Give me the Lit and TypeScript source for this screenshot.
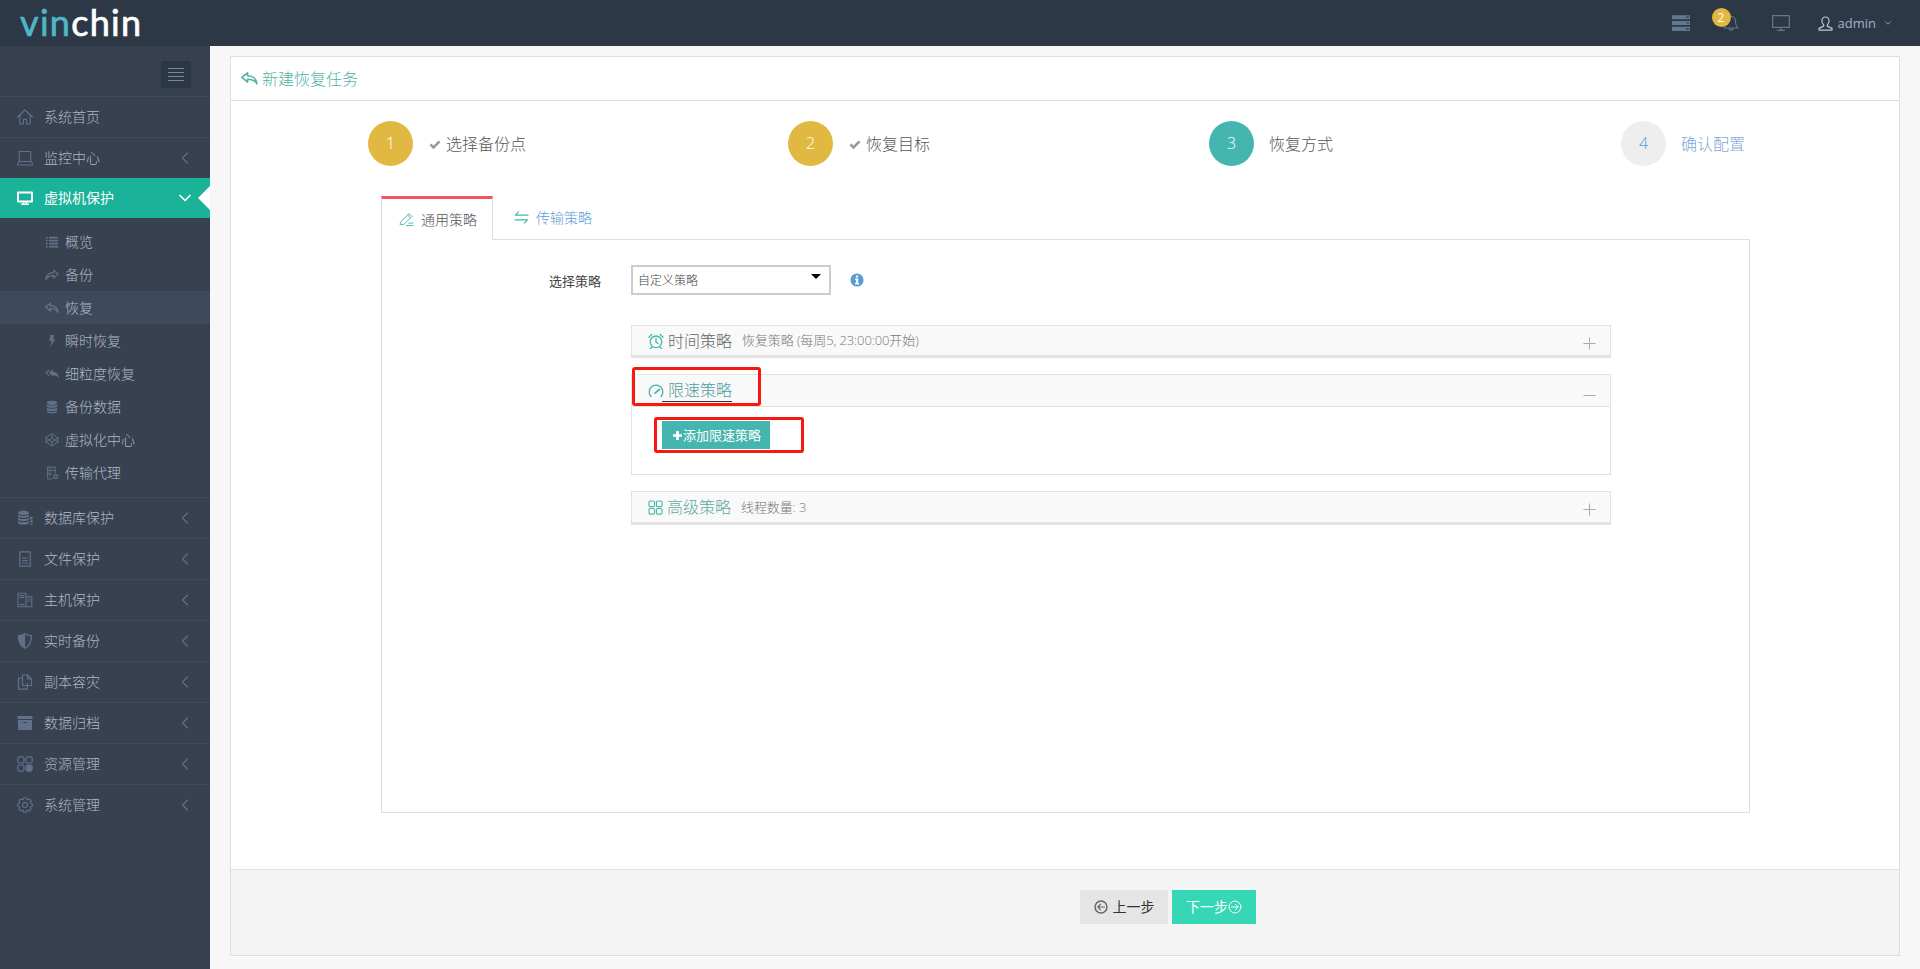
import { LitElement, html, css, svg } from "lit";
import { customElement } from "lit/decorators.js";

const S = (w: number, body: unknown, vb = "0 0 16 16") =>
  html`<svg class="ic" width=${w} height=${w} viewBox=${vb} fill="none" stroke="currentColor" stroke-width="1" stroke-linecap="round" stroke-linejoin="round">${body}</svg>`;

function gear(cx: number, cy: number, ro: number, ri: number, n: number) {
  let d = "";
  const step = (Math.PI * 2) / n;
  for (let i = 0; i < n; i++) {
    const a = i * step;
    const pts = [
      [ri, a - step * 0.5],
      [ro, a - step * 0.22],
      [ro, a + step * 0.22],
    ];
    for (const [r, t] of pts) {
      d += `${d ? "L" : "M"}${(cx + r * Math.cos(t)).toFixed(2)} ${(cy + r * Math.sin(t)).toFixed(2)} `;
    }
  }
  return d + "Z";
}

const I: Record<string, unknown> = {
  home: svg`<path d="M.5 8 8 1 15.500 8M2.800 6.300V15h3.600v-4.600h3.200V15h3.600V6.300" stroke-width="1.100"/>`,
  laptop: svg`<path d="M2.300 1.500h11.400v10H2.300zM2.300 11.500.4 14v1h15.200v-1l-1.900-2.500" stroke-width="1.100"/>`,
  desktop: svg`<path d="M1 2.400h14v9H1z" stroke-width="2"/><path d="M6.600 11.400v2.400M9.400 11.400v2.400M4.600 14.300h6.800" stroke-width="1.500"/>`,
  list: svg`<path d="M1 3h2M4.500 3H15M1 6.400h2M4.500 6.400H15M1 9.800h2M4.500 9.800H15M1 13.200h2M4.500 13.200H15" stroke-width="2" stroke-linecap="butt"/>`,
  share: svg`<path d="M9.800 2.600 15.200 7l-5.400 4.400V8.700C6.400 8.700 3 9.600 1 13c.2-4.400 3.600-7.400 8.800-7.600z" stroke-width="1.400"/>`,
  reply: svg`<path d="M6.200 2.600.8 7l5.400 4.400V8.700c3.400 0 6.800.9 8.800 4.300-.2-4.400-3.600-7.400-8.800-7.600z" stroke-width="1.500"/>`,
  bolt: svg`<path fill="currentColor" stroke="none" d="M6.400 1h4.200L8.800 5.400h2.800L6 15l1.600-7.200H4.800z"/>`,
  replyall: svg`<path fill="currentColor" stroke="none" d="M5 2.500v1.700L2.300 6.600 5 9v1.700L.4 6.600zM9 2.500v2.900c4 .1 6.500 3 6.600 7.600-1.300-2.400-3.300-3.600-6.600-3.600v1.300L4.400 6.600z"/>`,
  db: svg`<g fill="currentColor" stroke="none"><ellipse cx="8" cy="3.200" rx="6" ry="2.400"/><path d="M2 5c1 1.700 11 1.700 12 0v2.400c-1 2-11 2-12 0zM2 8.700c1 1.800 11 1.800 12 0v2.400c-1 2-11 2-12 0zM2 12.400c1 1.700 11 1.700 12 0v.6c-.3 2.800-11.700 2.800-12 0z"/></g>`,
  codepen: svg`<path d="M8 1.200 15 5.600v4.800L8 14.800 1 10.400V5.600zM8 1.200v4.400M8 10.400v4.400M1 5.600 8 10.400l7-4.800M1 10.400 8 5.600l7 4.800" stroke-width="1.100"/>`,
  agent: svg`<path d="M3 1.200h8.500v6.800M3 1.200v13.600h5.500M3 5h8.500M3 9h5M5 3.100h.8M5 7h.8M5 11h.8" stroke-width="1.100"/><circle cx="12.300" cy="12" r="2.200" stroke-width="1.500" stroke-dasharray="1.200 .6"/>`,
  coins: svg`<g fill="currentColor" stroke="none"><ellipse cx="6.500" cy="2.800" rx="5.500" ry="2.300"/><path d="M1 4.600c1 1.700 10 1.700 11 0v2c-1 1.900-10 1.900-11 0zM1 7.800c1 1.700 10 1.700 11 0v2c-1 1.900-10 1.900-11 0zM1 11c1 1.700 10 1.700 11 0v1.800c-.5 2.700-10.500 2.700-11 0z"/><path d="M13 7.300l2.700-.8v2c-.5.700-1.500 1-2.700 1.200zM13 10.700c1.200-.2 2.200-.5 2.700-1.100v2c-.5.700-1.500 1-2.700 1.200zM13 13.900c1.200-.2 2.200-.5 2.700-1.100v1c-.4.800-1.500 1.200-2.700 1.300z"/></g>`,
  file: svg`<path d="M2.800.8h10.400v14.400H2.800zM5.500 7h5M5.500 9.500h5M5.500 12h5" stroke-width="1.200"/>`,
  host: svg`<path d="M1 1.200h8v13.600H1zM9 4.800h5.800v10H9zM3 3.600h4M3 5.600h4M3 12.600h4M11 7h2M11 9h2" stroke-width="1.100"/>`,
  shield: svg`<path d="M8 .8c2 1.200 4.500 1.800 6.500 1.800 0 6-1.500 10.400-6.500 12.600C3 13 1.500 8.600 1.500 2.600 3.500 2.600 6 2 8 .8z" stroke-width="1.300"/><path fill="currentColor" stroke="none" d="M8 .8c-2 1.200-4.500 1.800-6.500 1.800C1.500 8.600 3 13 8 15.200z"/>`,
  copy: svg`<path d="M5.500 4H1.500v11.200h8.800V9M5.500 1h5L14.500 5v6.500h-9zM10.500 1v4h4" stroke-width="1.200"/>`,
  archive: svg`<path fill="currentColor" stroke="none" d="M.5 1h15v3H.5zM1 5h14v10H1z"/><path stroke="#374150" stroke-width="1" d="M6.500 7.500h3"/>`,
  res: svg`<rect x=".8" y=".8" width="6.200" height="6.200" rx="1.600" stroke-width="1.200"/><rect x="9" y=".8" width="6.200" height="6.200" rx="1.600" stroke-width="1.200"/><rect x=".8" y="9" width="6.200" height="6.200" rx="1.600" stroke-width="1.200"/><rect x="9" y="9" width="6.200" height="6.200" rx="1.600" fill="currentColor"/>`,
  gear: svg`<path d=${gear(8, 8, 7.4, 5.6, 8)} stroke-width="1.100"/><circle cx="8" cy="8" r="2.500" stroke-width="1.100"/>`,
  server: svg`<g fill="currentColor" stroke="none"><path fill-rule="evenodd" d="M0 1h16v3.600H0zM12.500 2.300v1H15v-1zM0 6.200h16v3.600H0zM12.500 7.500v1H15v-1zM0 11.400h16V15H0zM12.500 12.700v1H15v-1z"/></g>`,
  bell: svg`<path d="M8 1.200c-2.800 0-4.500 2-4.500 4.800 0 3.500-.8 5.600-2.500 7h14c-1.700-1.400-2.500-3.500-2.500-7 0-2.800-1.700-4.800-4.500-4.800zM6 13c0 2.700 4 2.700 4 0" stroke-width="1.100"/>`,
  monitor: svg`<path d="M.6 1.500h14.800v10.400H.6zM8 11.900v2.400M4.800 14.500h6.400" stroke-width="1.100"/>`,
  user: svg`<path d="M8 1c-2.400 0-3.800 1.800-3.800 4.300 0 2 .9 3.400 1.900 4.300v1.200L1 13.200V15h14v-1.800l-5.100-2.400V9.600c1-.9 1.900-2.300 1.900-4.300C11.800 2.800 10.400 1 8 1z" stroke-width="1.200"/>`,
  down: svg`<path d="M3 5.500 8 10.500l5-5" stroke-width="1.700"/>`,
  left: svg`<path d="M10.500 3 5.500 8l5 5" stroke-width="1.100"/>`,
  check: svg`<path d="M2 8.500 6 12.500 14 4.500" stroke-width="3.500" stroke-linecap="butt" stroke-linejoin="miter"/>`,
  pencil: svg`<path d="M2 10.500 10.800 1.700 13.800 4.700 5 13.500H1.500zM9.300 3.200l3 3M8 14.500h7M10.500 11.800h4.500"/>`,
  swap: svg`<path d="M5 2 1.500 5.500H15M11 14l3.500-3.500H1" stroke-width="1.200"/>`,
  alarm: svg`<circle cx="8" cy="8.800" r="5.800" stroke-width="1.300"/><path d="M8 5.300v3.700l2 1.500M1 4.200 3.800 1.500M15 4.200 12.200 1.500M4 14l-1.500 1.500M12 14l1.500 1.500" stroke-width="1.300"/>`,
  gauge: svg`<path d="M3 13.500A6.800 6.800 0 1 1 13 13.500" stroke-width="1.300"/><path d="M7 10.200 11.500 6.500" stroke-width="1.700"/>`,
  grid: svg`<rect x="1" y="1" width="6" height="6" rx="1.500" stroke-width="1.200"/><rect x="9" y="1" width="6" height="6" rx="1.500" stroke-width="1.200"/><rect x="1" y="9" width="6" height="6" rx="1.500" stroke-width="1.200"/><rect x="9" y="9" width="6" height="6" rx="1.500" stroke-width="1.200"/>`,
  plus: svg`<path d="M8 1.500v13M1.500 8h13" stroke-width="1.100" stroke-linecap="butt"/>`,
  minus: svg`<path d="M1.500 8h13" stroke-width="1.100" stroke-linecap="butt"/>`,
  plusb: svg`<path d="M8 1.500v13M1.500 8h13" stroke-width="3.800" stroke-linecap="butt"/>`,
  backc: svg`<circle cx="8" cy="8" r="6.800" stroke-width="1.700"/><path d="M12 8H4.500M7.500 4.800 4.300 8l3.200 3.200" stroke-width="1.300"/>`,
  nextc: svg`<circle cx="8" cy="8" r="6.800" stroke-width="1.100"/><path d="M4 8h7.500M8.500 4.800 11.700 8l-3.200 3.200" stroke-width="1.100"/>`,
  info: svg`<circle cx="8" cy="8" r="7.500" fill="currentColor" stroke="none"/><path fill="#fff" stroke="none" d="M6.800 2.800h2.600v2.200H6.800zM5.800 6.200h3.600v5.200h1v1.600H5.800v-1.600h1V7.800h-1z"/>`,
};

const mainMenu = [
  ["数据库保护", "coins"],
  ["文件保护", "file"],
  ["主机保护", "host"],
  ["实时备份", "shield"],
  ["副本容灾", "copy"],
  ["数据归档", "archive"],
  ["资源管理", "res"],
  ["系统管理", "gear"],
];
const subMenu = [
  ["概览", "list"],
  ["备份", "share"],
  ["恢复", "reply"],
  ["瞬时恢复", "bolt"],
  ["细粒度恢复", "replyall"],
  ["备份数据", "db"],
  ["虚拟化中心", "codepen"],
  ["传输代理", "agent"],
];
const steps = [
  { n: "1", t: "选择备份点", st: "done" },
  { n: "2", t: "恢复目标", st: "done" },
  { n: "3", t: "恢复方式", st: "cur" },
  { n: "4", t: "确认配置", st: "todo" },
];

@customElement("app-root")
export class AppRoot extends LitElement {
  static styles = css`
    :host {
      display: flex;
      flex-direction: column;
      height: 969px;
      width: 1920px;
      overflow: hidden;
      font-family: "Open Sans", "Noto Sans CJK SC", sans-serif;
      font-size: 14px;
      font-weight: 300;
      color: #555;
      background: #f7f7f7;
    }
    * { box-sizing: border-box; }
    .ic { display: block; flex: none; }
    .lb { margin-bottom: 2px; }
    .top {
      height: 46px;
      flex: none;
      background: #2c3846;
      display: flex;
      align-items: center;
    }
    .logo {
      margin-left: 20px;
      margin-bottom: 2px;
      font-family: "Lato", sans-serif;
      font-size: 36px;
      line-height: 44px;
      letter-spacing: 1.3px;
      font-weight: 400;
      -webkit-text-stroke: 0.7px currentColor;
      color: #fff;
      flex: 1;
    }
    .logo b { font-weight: 400; color: #4fb6c4; }
    .tools {
      display: flex;
      align-items: center;
      color: #64768c;
      padding-right: 28px;
    }
    .bellw { position: relative; margin-left: 33px; color: #64768c; }
    .badge {
      position: absolute;
      left: -11px;
      top: -7px;
      width: 19px;
      height: 19px;
      border-radius: 50%;
      background: #e1b942;
      color: #fff;
      font-size: 12px;
      font-weight: 400;
      line-height: 19px;
      text-align: center;
    }
    .mon { margin-left: 33px; }
    .usr { margin-left: 28px; color: #b8c8da; }
    .adm { margin-left: 5px; font-size: 13px; font-weight: 400; color: #9db4cc; }
    .chev { margin-left: 8px; color: #9db4cc; }
    .body { flex: 1; display: flex; min-height: 0; }
    .side { width: 210px; flex: none; background: #374150; color: #aeb8c8; }
    .togw {
      height: 51px;
      padding: 15px 19px 0 0;
      border-bottom: 1px solid #3f4a5a;
      display: flex;
      justify-content: flex-end;
      align-items: flex-start;
    }
    .tog {
      width: 30px;
      height: 27px;
      background: #2c3846;
      display: flex;
      flex-direction: column;
      justify-content: center;
      align-items: center;
      gap: 3px;
    }
    .tog i { display: block; width: 16px; height: 1px; background: #7a8a99; }
    .it {
      height: 40px;
      display: flex;
      align-items: center;
      padding-left: 17px;
      position: relative;
    }
    .it.ln { height: 41px; border-bottom: 1px solid #3f4a5a; }
    .it .lead { color: #62718a; width: 16px; margin-right: 11px; display: flex; }
    .it .arr { position: absolute; left: 177px; top: 12px; color: #62718a; }
    .it.act { background: #1bb29a; color: #fff; font-weight: 400; }
    .it.act .lead { color: #fff; }
    .it.act .arr { color: #fff; }
    .it.act::after {
      content: "";
      position: absolute;
      right: 0;
      top: 8px;
      border: 12px solid transparent;
      border-left-width: 0;
      border-right-color: #fff;
    }
    .subs { padding: 7px 0 8px; border-bottom: 1px solid #3f4a5a; }
    .sub {
      height: 33px;
      display: flex;
      align-items: center;
      padding-left: 45px;
      gap: 6px;
    }
    .sub.on { background: #3e4a5c; }
    .sub .ic { color: #62718a; }
    .main { flex: 1; padding: 10px 20px 13px 20px; min-width: 0; display: flex; }
    .panel {
      flex: 1;
      border: 1px solid #dedede;
      background: #fff;
      display: flex;
      flex-direction: column;
    }
    .ph {
      height: 44px;
      flex: none;
      border-bottom: 1px solid #dedede;
      display: flex;
      align-items: center;
      padding-left: 10px;
      gap: 4px;
      color: #4fb3a5;
      font-size: 16px;
    }
    .pb { flex: 1; min-height: 0; padding: 20px 149px 0 150px; }
    .steps {
      display: grid;
      grid-template-columns: 420px 421px 412px 1fr;
      margin-left: -13px;
      height: 45px;
      align-items: center;
    }
    .step { display: flex; align-items: center; font-size: 16px; }
    .num {
      width: 45px;
      height: 45px;
      border-radius: 50%;
      text-align: center;
      line-height: 45px;
      color: #fff;
      background: #e1b942;
      flex: none;
    }
    .step.cur .num { background: #45b6af; }
    .step.todo .num { background: #eee; color: #5b9bd5; }
    .step .ck { margin-left: 16px; margin-right: 5px; color: #999; }
    .step.cur .tx, .step.todo .tx { margin-left: 15px; }
    .step.todo .tx { color: #7fa8d8; }
    .tabs { margin-top: 30px; display: flex; height: 43px; }
    .tab {
      display: flex;
      align-items: center;
      height: 43px;
      font-size: 14px;
      color: #5b9bd5;
      padding-left: 17px;
      gap: 7px;
    }
    .tab .ic { color: #45b6af; }
    .tab.on {
      width: 112px;
      border: 1px solid #dedede;
      border-top: 3px solid #f3565d;
      border-bottom: 0;
      color: #555;
      background: #fff;
      position: relative;
      z-index: 1;
      height: 44px;
    }
    .tab.off { padding-left: 21px; }
    .pane {
      border: 1px solid #dedede;
      height: 574px;
    }
    .row { display: flex; align-items: flex-start; padding-top: 25px; height: 55px; }
    .lab { width: 219px; text-align: right; margin-right: 30px; font-size: 13px; font-weight: 400; line-height: 32px; color: #444; }
    .sel {
      width: 200px;
      height: 30px;
      border: 2px solid #ccc;
      font-size: 12px;
      line-height: 27px;
      padding-left: 5px;
      position: relative;
      color: #444;
    }
    .sel::after {
      content: "";
      position: absolute;
      right: 8px;
      top: 7px;
      border: 5px solid transparent;
      border-top: 5px solid #000;
      border-bottom: 0;
    }
    .infow { margin-left: 19px; margin-top: 8px; color: #5b9bd5; }
    .cols {
      margin: 30px 138px 0 249px;
      display: flex;
      flex-direction: column;
      gap: 16px;
    }
    .col { border: 1px solid #e2e2e2; }
    .col.cl { border-bottom-width: 3px; }
    .hd {
      height: 29px;
      background: #f9f9f9;
      display: flex;
      align-items: center;
      padding-left: 16px;
      position: relative;
      color: #666;
    }
    .col.op .hd { height: 32px; border-bottom: 1px solid #e2e2e2; }
    .col.cl:last-child .hd { height: 30px; }
    .col.cl:last-child .ti { color: #5fa8a6; }
    .hd .lead { color: #45b6af; }
    .hd .ti { font-size: 16px; margin-left: 4px; }
    .hd .sm { font-size: 13px; margin-left: 10px; color: #777; letter-spacing: -0.1px; }
    .hd .tog2 { position: absolute; left: 950px; top: 10px; color: #aaa; }
    .col.op .tog2 { top: 13px; }
    .ul { display: flex; align-items: center; color: #4f9ea0; }
    .hd .ul .ti { margin-left: -2px; padding-left: 6px; border-bottom: 1px solid #333; line-height: 20px; height: 22px; margin-top: 1px; }
    .anno {
      position: absolute;
      border: 3px solid #f5190f;
      border-radius: 3px;
      pointer-events: none;
    }
    .a1 { left: 0; top: -8px; width: 129px; height: 39px; }
    .bdy { height: 67px; padding: 14px 0 0 30px; }
    .btnw { position: relative; display: inline-block; }
    .a2 { left: -8px; top: -4px; width: 150px; height: 36px; }
    .add {
      display: flex;
      align-items: center;
      height: 28px;
      width: 108px;
      background: #45b6af;
      color: #fff;
      font-size: 13px;
      font-weight: 400;
      padding-left: 10px;
    }
    .ft {
      height: 86px;
      flex: none;
      border-top: 1px solid #e2e2e2;
      background: #f4f4f4;
      padding: 20px 0 0 849px;
      display: flex;
      gap: 4px;
      align-items: flex-start;
    }
    .b {
      height: 34px;
      display: flex;
      align-items: center;
      justify-content: center;
      font-size: 14px;
      font-weight: 400;
    }
    .b1 { width: 88px; background: #e5e5e5; color: #333; gap: 5px; }
    .b1 .ic { color: #666; }
    .b2 { width: 84px; background: #36d7b7; color: #fff; }
  `;

  render() {
    return html`
      <div class="top">
        <div class="logo"><b>vin</b>chin</div>
        <div class="tools">
          ${S(18, I.server)}
          <div class="bellw">${S(16, I.bell)}<div class="badge">2</div></div>
          <div class="mon">${S(18, I.monitor)}</div>
          <div class="usr">${S(15, I.user)}</div>
          <div class="adm">admin</div>
          <div class="chev">${S(8, I.down)}</div>
        </div>
      </div>
      <div class="body">
        <aside class="side">
          <div class="togw"><div class="tog"><i></i><i></i><i></i><i></i></div></div>
          <div class="it ln"><span class="lead">${S(16, I.home)}</span><span class="lb">系统首页</span></div>
          <div class="it"><span class="lead">${S(16, I.laptop)}</span><span class="lb">监控中心</span><span class="arr">${S(16, I.left)}</span></div>
          <div class="it act"><span class="lead">${S(16, I.desktop)}</span><span class="lb">虚拟机保护</span><span class="arr">${S(16, I.down)}</span></div>
          <div class="subs">
            ${subMenu.map(
              ([t, ic]) => html`<div class="sub ${t === "恢复" ? "on" : ""}">${S(14, I[ic])}<span class="lb">${t}</span></div>`
            )}
          </div>
          ${mainMenu.map(
            ([t, ic], i) => html`<div class="it ${i < mainMenu.length - 1 ? "ln" : ""}">
              <span class="lead">${S(16, I[ic])}</span><span class="lb">${t}</span><span class="arr">${S(16, I.left)}</span>
            </div>`
          )}
        </aside>
        <main class="main">
          <section class="panel">
            <div class="ph">${S(17, I.reply)}<span class="lb">新建恢复任务</span></div>
            <div class="pb">
              <div class="steps">
                ${steps.map(
                  (s) => html`<div class="step ${s.st}">
                    <div class="num">${s.n}</div>
                    ${s.st === "done" ? html`<span class="ck">${S(12, I.check)}</span>` : ""}
                    <span class="tx lb">${s.t}</span>
                  </div>`
                )}
              </div>
              <div class="tabs">
                <div class="tab on">${S(15, I.pencil)}<span class="lb">通用策略</span></div>
                <div class="tab off">${S(15, I.swap)}<span class="lb">传输策略</span></div>
              </div>
              <div class="pane">
                <div class="row">
                  <div class="lab">选择策略</div>
                  <div class="sel">自定义策略</div>
                  <div class="infow">${S(14, I.info)}</div>
                </div>
                <div class="cols">
                  <div class="col cl">
                    <div class="hd">
                      <span class="lead">${S(16, I.alarm)}</span><span class="ti lb">时间策略</span>
                      <span class="sm lb">恢复策略 (每周5, 23:00:00开始)</span>
                      <span class="tog2">${S(15, I.plus)}</span>
                    </div>
                  </div>
                  <div class="col op">
                    <div class="hd">
                      <span class="ul"><span class="lead">${S(16, I.gauge)}</span><span class="ti">限速策略</span></span>
                      <span class="tog2">${S(15, I.minus)}</span>
                      <div class="anno a1"></div>
                    </div>
                    <div class="bdy">
                      <div class="btnw">
                        <div class="add">${S(11, I.plusb)}<span class="lb">添加限速策略</span></div>
                        <div class="anno a2"></div>
                      </div>
                    </div>
                  </div>
                  <div class="col cl">
                    <div class="hd">
                      <span class="lead">${S(15, I.grid)}</span><span class="ti lb">高级策略</span>
                      <span class="sm lb">线程数量: 3</span>
                      <span class="tog2">${S(15, I.plus)}</span>
                    </div>
                  </div>
                </div>
              </div>
            </div>
            <div class="ft">
              <div class="b b1">${S(14, I.backc)}<span class="lb">上一步</span></div>
              <div class="b b2"><span class="lb">下一步</span>${S(14, I.nextc)}</div>
            </div>
          </section>
        </main>
      </div>
    `;
  }
}
